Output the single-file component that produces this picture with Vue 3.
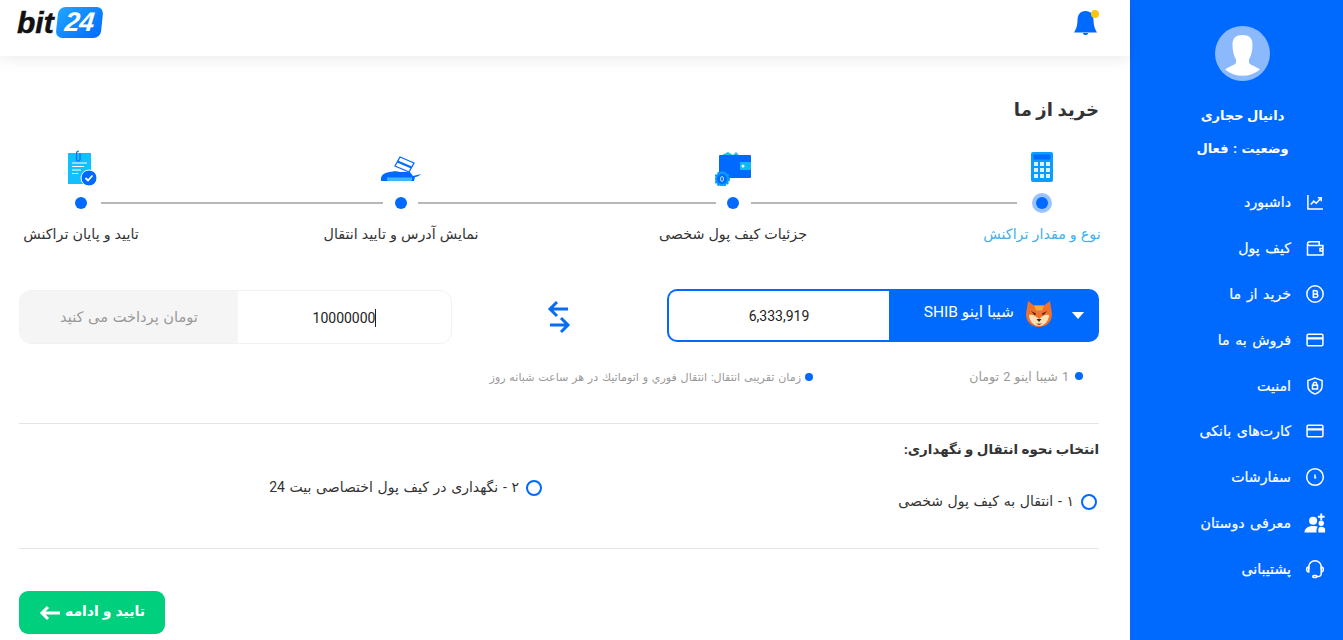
<script setup>
const menu = [
  { label: 'داشبورد', paths: ['M3.500 3.500v17h18', 'M7 15l3.500-4 3 2.500 5.500-6', 'M15.500 7H19.500v4'] },
  { label: 'کیف پول', paths: ['M3 7V20.500h18.500V9H5.500A2.500 2.500 0 0 1 3 7a2.500 2.500 0 0 1 2.500-2.500H17V9', 'M21.500 12.500h-3.500v3h3.500'] },
  { label: 'خرید از ما', paths: ['M12 2.200a9.800 9.800 0 1 0 0 19.600a9.800 9.800 0 1 0 0-19.600z', 'M10 8h3a2 2 0 0 1 0 4h-3zM10 12h3.400a2 2 0 0 1 0 4H10zM10 8v8M11.500 6.800V8M11.500 16v1.200'] },
  { label: 'فروش به ما', paths: ['M4 5h16a1.500 1.500 0 0 1 1.500 1.500v11a1.500 1.500 0 0 1-1.500 1.500H4a1.500 1.500 0 0 1-1.500-1.500v-11A1.500 1.500 0 0 1 4 5z', 'M2.500 9.500h19M2.500 10.500h19'] },
  { label: 'امنیت', paths: ['M12 2.500l8.500 3v6.500c0 4.500-3.500 8-8.500 9.500c-5-1.500-8.500-5-8.500-9.500V5.500z', 'M9 11h6v4.500H9zM10 11V9.500a2 2 0 0 1 4 0V11'] },
  { label: 'کارت‌های بانکی', paths: ['M4 5h16a1.500 1.500 0 0 1 1.500 1.500v11a1.500 1.500 0 0 1-1.500 1.500H4a1.500 1.500 0 0 1-1.500-1.500v-11A1.500 1.500 0 0 1 4 5z', 'M2.500 9.500h19M2.500 10.500h19'] },
  { label: 'سفارشات', paths: ['M12 2a10 10 0 1 0 0 20a10 10 0 1 0 0-20z', 'M12 9v4h1.500'] },
  { label: 'معرفی دوستان', solid: true, paths: ['M9.500 5a4.200 4.200 0 1 1 0 8.400a4.200 4.200 0 1 1 0-8.400z', 'M0.500 21.500c0-4.500 3.500-7 9-7c2 0 3.700.300 5 1c-1.200 1-1.500 2.500-1.500 6z', 'M18 9a2.800 2.800 0 1 1 0 5.600a2.800 2.800 0 1 1 0-5.600z', 'M15 21.500v-3.500c0-1.500 1-2.500 3-2.500s4 1 4 2.500v3.500z', 'M17 1.500h2v2.500h2.500v2H19v2.500h-2V6h-2.500V4H17z'] },
  { label: 'پشتیبانی', paths: ['M4.500 12.500V9.500a7.500 7.500 0 0 1 15 0v3', 'M4.500 9.500a2.500 3 0 0 0 0 6z', 'M19.500 9.500a2.500 3 0 0 1 0 6z', 'M19.500 15.500v1.500a4 4 0 0 1-4 4H13', 'M10.500 19.800h2.500a1.200 1.200 0 0 1 0 2.400h-2.500a1.200 1.200 0 0 1 0-2.400z'] },
]

const steps = [
  { key: 'calc', label: 'نوع و مقدار تراکنش', line: 266 },
  { key: 'wallet', label: 'جزئیات کیف پول شخصی', line: 298 },
  { key: 'pos', label: 'نمایش آدرس و تایید انتقال', line: 282 },
  { key: 'doc', label: 'تایید و پایان تراکنش' },
]
</script>

<template>
  <div class="page" dir="rtl">
    <aside class="side">
      <div class="avatar">
        <svg viewBox="0 0 55 55">
          <path d="M27.500 9c-6.500 0-10 3-10 9.500c0 5.500 1 11 3.500 15v3.500c-2 2.500-7 3.500-11 6.500a27.500 27.500 0 0 0 35 0c-4-3-9-4-11-6.500v-3.500c2.500-4 3.500-9.500 3.500-15c0-6.500-3.500-9.500-10-9.500z" fill="#fff" />
        </svg>
      </div>
      <div class="name">دانیال حجاری</div>
      <div class="status">وضعیت : فعال</div>
      <nav class="menu">
        <a v-for="item in menu" :key="item.label" class="menu-item">
          <svg viewBox="0 0 24 24" :class="{ solid: item.solid }"><path v-for="d in item.paths" :key="d" :d="d" /></svg>
          <span>{{ item.label }}</span>
        </a>
      </nav>
    </aside>

    <main class="main">
      <header class="top">
        <button class="bell">
          <svg viewBox="0 0 28 28">
            <path d="M13.500 3c-5.500 0-8 4-8 9.500c0 5-1.500 9-3.500 12h23c-2-3-3.500-7-3.500-12c0-5.500-2.500-9.500-8-9.500z" fill="#006aff" />
            <path d="M11 25h5c0 1.500-1 2-2.500 2s-2.500-.5-2.500-2z" fill="#006aff" />
            <circle cx="23" cy="6" r="4" fill="#fdc315" />
          </svg>
        </button>
        <div class="logo" dir="ltr">
          <span class="logo-bit">bit</span>
          <span class="logo-num"><span>24</span></span>
        </div>
      </header>

      <section class="content">
        <h1 class="title">خرید از ما</h1>

        <div class="rail">
          <template v-for="(s, i) in steps" :key="s.key">
            <div class="step" :class="{ active: i === 0 }">
              <svg v-if="s.key === 'calc'" class="step-icon" viewBox="0 0 36 36">
                <rect x="7" y="2" width="22" height="30" rx="2" fill="#0a9dff" />
                <rect x="9.500" y="4.500" width="17" height="5" rx="1" fill="#006aff" />
                <g fill="#d8f2ff">
                  <rect x="10" y="12" width="4" height="4" /><rect x="16" y="12" width="4" height="4" /><rect x="22" y="12" width="4" height="4" />
                  <rect x="10" y="18" width="4" height="4" /><rect x="16" y="18" width="4" height="4" /><rect x="22" y="18" width="4" height="4" />
                  <rect x="10" y="24" width="4" height="4" /><rect x="16" y="24" width="4" height="4" /><rect x="22" y="24" width="4" height="4" />
                </g>
              </svg>
              <svg v-else-if="s.key === 'wallet'" class="step-icon" viewBox="0 0 36 36">
                <path d="M7 5l6-3l5 3l3-3l3 3l9 0v5H7z" fill="#17c3f5" />
                <rect x="4" y="5" width="32" height="23" rx="1" fill="#006aff" />
                <rect x="25" y="12" width="11" height="8" fill="#12b8f2" />
                <circle cx="28" cy="16" r="1.500" fill="#fff" />
                <circle cx="7" cy="29" r="7" fill="#0a9dff" stroke="#0a9dff" stroke-dasharray="2 1.500" stroke-width="2" />
                <circle cx="7" cy="29" r="5" fill="#006aff" />
                <ellipse cx="7" cy="29" rx="1.500" ry="2.500" fill="none" stroke="#bfe6ff" stroke-width="1" />
              </svg>
              <svg v-else-if="s.key === 'pos'" class="step-icon wide" viewBox="0 0 42 36">
                <path d="M15 16l5-9l14 6l-5 9z" fill="#fff" stroke="#006aff" stroke-width="1.300" />
                <path d="M17.500 11.500l14 6" stroke="#006aff" stroke-width="2" />
                <path d="M1 28c1-4 4-5 8-6c6-1 8-1 11 0l10 0l3 4l8-2c-2 2-4 3-6 3l-1 4H1z" fill="#006aff" />
                <path d="M7 27.500h25v2c0 1-1 1.500-2 1.500H9c-1 0-2-.5-2-1.500z" fill="#3db8f5" />
              </svg>
              <svg v-else class="step-icon" viewBox="0 0 36 36">
                <rect x="5" y="3" width="23" height="31" fill="#12bfff" />
                <path d="M16 1c-2 0-2.500 1-2.500 2.500v6c0 2 3.500 2 3.500 0v-6" fill="none" stroke="#006aff" stroke-width="1.200" />
                <path d="M9 13h15M9 16.500h12M9 20h9M9 23.500h6" stroke="#fff" stroke-width="1.200" />
                <circle cx="26" cy="28" r="8" fill="#006aff" stroke="#fff" />
                <path d="M22.500 28l2.500 2.500l4.500-5" fill="none" stroke="#fff" stroke-width="1.800" />
              </svg>
              <span class="dot" />
              <span class="step-label">{{ s.label }}</span>
            </div>
            <span v-if="s.line" class="line" :style="{ width: s.line + 'px' }" />
          </template>
        </div>

        <div class="exchange">
          <div class="pay-to">
            <div class="coin">
              <svg class="caret" viewBox="0 0 16 10"><path d="M1 1h14L8 9z" fill="#fff" /></svg>
              <svg class="shib" viewBox="0 0 28 28">
                <path d="M3 1l6 4.500h10L25 1l2 13c0 8-6 13-13 13S1 22 1 14z" fill="#f0712b" />
                <path d="M9 5.500h10l-2 5h-6z" fill="#f9a63c" />
                <path d="M4 15c3-1 6 0 10 4c4-4 7-5 10-4c0 5-4 11-10 11S4 20 4 15z" fill="#fbe0b8" />
                <path d="M6 11l5 2.500l-1 2zM22 11l-5 2.500l1 2z" fill="#4a1f10" />
                <path d="M11.500 19h5l-2.500 3z" fill="#4a1f10" />
                <path d="M11 23.500h6l-3 2z" fill="#d33c2b" />
              </svg>
              <span dir="rtl">شیبا اینو SHIB</span>
            </div>
            <div class="coin-value">6,333,919</div>
          </div>

          <svg class="swap" viewBox="0 0 24 34">
            <path d="M21 9H3M10 2L3 9l7 7M3 25h18M14 18l7 7l-7 7" fill="none" stroke="#0a6cf0" stroke-width="3" />
          </svg>

          <div class="pay-from">
            <div class="pay-value"><span class="typed">10000000</span></div>
            <div class="pay-label">تومان پرداخت می کنید</div>
          </div>
        </div>

        <div class="info">
          <div class="info-rate"><i />1 شیبا اینو 2 تومان</div>
          <div class="info-time"><i />زمان تقریبی انتقال: انتقال فوري و اتوماتیك در هر ساعت شبانه روز</div>
        </div>

        <hr class="rule first" />

        <h2 class="sub">انتخاب نحوه انتقال و نگهداری:</h2>
        <div class="options">
          <label class="opt opt-one"><span class="radio" />۱ - انتقال به کیف پول شخصی</label>
          <label class="opt opt-two"><span class="radio" />۲ - نگهداری در کیف پول اختصاصی بیت 24</label>
        </div>

        <hr class="rule" />

        <button class="next">
          تایید و ادامه
          <svg viewBox="0 0 22 16"><path d="M21 8H3M9 2L3 8l6 6" fill="none" stroke="#fff" stroke-width="3" /></svg>
        </button>
      </section>
    </main>
  </div>
</template>

<style>
html, body { margin: 0; overflow: hidden; }
</style>

<style scoped>
.page {
  display: flex; width: 1343px; height: 640px; background: #fff; color: #333;
  font-family: Roboto, "DejaVu Sans", sans-serif; font-size: 14px;
}
.side { flex: none; width: 213px; background: #006aff; color: #fff; display: flex; flex-direction: column; align-items: center; padding: 26px 0 0 12px; box-sizing: border-box; }
.avatar { width: 55px; height: 55px; border-radius: 50%; background: #8cb9fb; overflow: hidden; }
.avatar svg { display: block; width: 55px; height: 55px; }
.name { margin-top: 25px; height: 20px; line-height: 20px; font-size: 13px; font-weight: 700; }
.status { margin-top: 13px; height: 20px; line-height: 20px; font-size: 13px; font-weight: 700; word-spacing: 1.500px; }
.menu { align-self: stretch; margin-top: 20px; padding-right: 18px; display: flex; flex-direction: column; }
.menu-item { height: 45.900px; display: flex; align-items: center; gap: 14px; font-size: 14.200px; word-spacing: 2px; -webkit-text-stroke: .2px #fff; }
.menu-item svg { flex: none; width: 20px; height: 20px; fill: none; stroke: #fff; stroke-width: 1.800; }
.menu-item svg.solid { fill: #fff; stroke: none; width: 23px; height: 23px; margin-inline: -1.500px -1.500px; }

.main { flex: 1; min-width: 0; }
.top {
  height: 56px; padding: 0 30px 0 17px; background: #fff; display: flex; align-items: flex-start; justify-content: space-between;
  box-shadow: 0 2px 16px rgba(0,0,0,.09); position: relative;
}
.bell { width: 28px; height: 28px; margin-top: 8px; border: 0; padding: 0; background: none; }
.bell svg { display: block; width: 28px; height: 28px; }
.logo { display: flex; align-items: center; gap: 3px; height: 31px; margin-top: 7px; font-family: "Liberation Sans", sans-serif; font-weight: 700; font-style: italic; }
.logo-bit { font-size: 30px; line-height: 31px; color: #111; -webkit-text-stroke: .5px #111; }
.logo-num { width: 45px; height: 31px; background: linear-gradient(135deg, #22a6ff, #006aff); border-radius: 7px; transform: skewX(-6deg); display: grid; place-items: center; color: #fff; }
.logo-num span { font-size: 27px; line-height: 31px; letter-spacing: -.5px; }

.content { padding: 40px 31px 0 19px; }
.title { margin: 0; height: 28px; line-height: 28px; font-size: 18.100px; font-weight: 700; color: #333; }

.rail { margin-top: 26px; padding-right: 51px; display: flex; align-items: flex-start; height: 94px; }
.step { flex: none; width: 12px; display: flex; flex-direction: column; align-items: center; }
.step-icon { flex: none; width: 36px; height: 36px; margin-bottom: 11px; }
.step-icon.wide { width: 42px; }
.dot { flex: none; width: 12px; height: 12px; border-radius: 50%; background: #006aff; }
.step.active .dot { box-shadow: 0 0 0 4px rgba(0,106,255,.4); }
.step-label { margin-top: 15px; height: 20px; line-height: 20px; font-size: 14.300px; word-spacing: .5px; white-space: nowrap; color: #333; }
.step.active .step-label { color: #3fb0ec; }
.line { flex: none; height: 2px; margin: 52px 11px 0; background: #b8b8b8; }
.step.active + .line { margin-inline: 19px 12px; }
.line:nth-last-child(2) { margin-inline: 12px 14px; }

.exchange { margin-top: 45px; display: flex; align-items: flex-start; justify-content: space-between; height: 55px; }
.pay-to { flex: none; width: 432px; height: 53px; box-sizing: border-box; display: flex; background: #006aff; border-radius: 10px; padding: 2px; overflow: hidden; }
.coin { flex: none; width: 208px; display: flex; align-items: center; color: #fff; font-size: 15.500px; padding: 0 12px 8px 0; box-sizing: border-box; gap: 11px; }
.caret { width: 14px; height: 9px; flex: none; margin-top: 8px; }
.shib { width: 28px; height: 28px; flex: none; margin: 4px 7px 0 0; }
.coin-value { flex: 1; background: #fff; border-start-end-radius: 8px; border-end-end-radius: 8px; display: flex; align-items: center; justify-content: center; font-size: 14px; color: #222; padding-top: 1px; }
.swap { flex: none; width: 24px; height: 34px; margin: 11px 2px 0 0; }
.pay-from { flex: none; width: 433px; height: 54px; margin-top: 1px; box-sizing: border-box; display: flex; border: 1px solid #f2f2f2; border-radius: 12px; overflow: hidden; }
.pay-value { flex: 1; display: flex; align-items: center; justify-content: center; font-size: 14px; color: #222; padding-top: 1px; }
.typed { border-right: 1px solid #222; line-height: 18px; direction: ltr; }
.pay-label { flex: none; width: 218px; background: #f5f5f5; display: flex; align-items: center; justify-content: center; font-size: 14.600px; word-spacing: 1px; color: #999; }

.info { margin-top: 23px; display: flex; align-items: center; height: 20px; color: #999; word-spacing: 1px; }
.info i { flex: none; width: 8px; height: 8px; border-radius: 50%; background: #006aff; margin-left: 6px; }
.info-rate { flex: none; width: 270px; padding-right: 16px; display: flex; align-items: center; font-size: 12.600px; margin-top: -2px; }
.info-time { display: flex; align-items: center; font-size: 11.100px; }
.info-time i { margin-left: 4px; }

.rule { margin: 36px 0 0; border: 0; border-top: 1px solid #e4e4e4; }
.sub { margin: 16px 0 0; height: 20px; line-height: 20px; font-size: 13.400px; font-weight: 700; color: #333; }
.options { display: grid; grid-template-columns: 540px 540px; height: 52px; }
.opt { display: flex; align-items: center; height: 20px; font-size: 14px; word-spacing: 1.200px; color: #333; }
.opt-one { margin-top: 31px; padding-right: 2px; }
.opt-two { margin-top: 17px; padding-right: 17px; }
.radio { flex: none; width: 12px; height: 12px; border: 2px solid #006aff; border-radius: 50%; margin-left: 7px; margin-top: 2px; }
.rule:not(.first) { margin-top: 36px; }

.next {
  margin-top: 42px; margin-right: 934px; width: 146px; height: 43px; border: 0; border-radius: 9px; background: #00d07e; color: #fff;
  display: flex; align-items: center; justify-content: center; gap: 4px; padding: 0 0 3px; font-family: inherit; font-size: 14px; font-weight: 700; word-spacing: .5px;
}
.next svg { flex: none; width: 22px; height: 16px; margin-top: 3px; }
</style>
